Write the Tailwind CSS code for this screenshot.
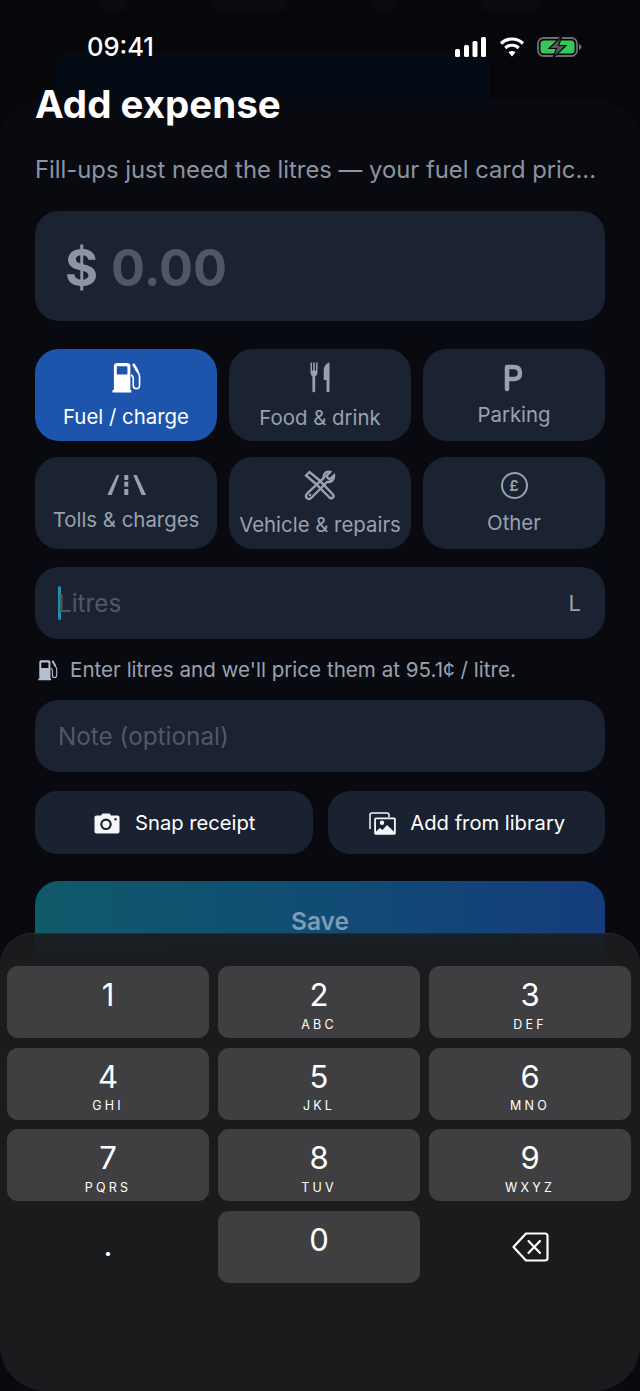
<!DOCTYPE html>
<html lang="en">
<head>
    <meta charset="UTF-8">
    <meta name="viewport" content="width=device-width, initial-scale=1.0">
    <title>Add expense</title>
    <script src="https://cdn.jsdelivr.net/npm/@tailwindcss/browser@4"></script>
</head>
<body class="bg-[#05070b] font-['Inter',sans-serif]">
    <div class="relative w-[640px] h-[1391px] overflow-hidden bg-[#05070b]">
        <!-- Dimmed page behind the sheet -->
        <div class="absolute top-0 left-0 right-0 h-[14px] flex justify-between px-[100px] blur-[3px]">
            <span class="w-[26px] h-[10px] bg-white/[0.03]"></span>
            <span class="w-[74px] h-[10px] bg-white/[0.03]"></span>
            <span class="w-[24px] h-[10px] bg-white/[0.03]"></span>
            <span class="w-[58px] h-[10px] bg-white/[0.03]"></span>
        </div>
        <div class="absolute left-[55px] top-[53px] w-[435px] h-[59px] bg-[#050b14] rounded-lg"></div>
        <div class="absolute left-0 right-0 top-[100px] bottom-0 rounded-t-[40px] bg-[#080a0f]"></div>

        <!-- Status bar -->
        <div class="relative h-[88px] flex items-start justify-between pl-[87px] pr-[58px] pt-[33px]">
            <span class="text-white text-[25.500px] leading-[28px] font-medium">09:41</span>
            <div class="flex items-center gap-[11px] pt-[3px]">
                <svg width="33" height="22" viewBox="0 0 33 22" fill="#fff">
                    <rect x="1" y="13" width="5" height="8" rx="1.5"/>
                    <rect x="10" y="9" width="5" height="12" rx="1.5"/>
                    <rect x="18.500" y="5" width="5" height="16" rx="1.500"/>
                    <rect x="27" y="1" width="5" height="20" rx="1.500"/>
                </svg>
                <svg width="28" height="22" viewBox="0 0 25 22" fill="none" stroke="#fff" stroke-width="3.200">
                    <path d="M1.500 7.500C7.500 1.500 17.500 1.500 23.500 7.500"/>
                    <path d="M5.800 12C9.500 8.300 15.500 8.300 19.200 12"/>
                    <path d="M12.500 20.500L9 16.300C11 14.500 14 14.500 16 16.300Z" fill="#fff" stroke="none"/>
                </svg>
                <svg width="45" height="22" viewBox="0 0 45 22" fill="none">
                    <rect x="1" y="2" width="39" height="18" rx="5.500" stroke="#6b6d70" stroke-width="1.800"/>
                    <rect x="3.500" y="4.500" width="34" height="13" rx="3.500" fill="#36c759"/>
                    <path d="M42 8v6c1.200-.4 2.500-1.600 2.500-3s-1.300-2.600-2.500-3z" fill="#6b6d70"/>
                    <path d="M25 0L12 12.500H19.500L16 22L29 9.500H21.500Z" fill="#55575a" stroke="#05070b" stroke-width="1.200"/>
                </svg>
            </div>
        </div>

        <!-- Sheet content -->
        <div class="relative px-[35px]">
            <h1 class="text-white text-[38.500px] leading-[32px] font-bold">Add expense</h1>
            <p class="mt-[35px] text-[#8b94a3] text-[23.800px] leading-[30px] whitespace-nowrap">Fill-ups just need the litres — your fuel card pric...</p>

            <div class="mt-[26px] h-[110px] rounded-[24px] bg-[#1b2231] flex items-center pl-[30px] pt-[3px] text-[50.500px] font-bold">
                <span class="text-[#8c95a4]">$</span><span class="ml-[13px] text-[#4f5665]">0.00</span>
            </div>

            <!-- Categories -->
            <div class="mt-[28px] grid grid-cols-3 gap-x-[12px] gap-y-[16px]">
                <div class="h-[92px] rounded-[24px] bg-[#1c55ab] flex flex-col items-center text-white pt-[13px]">
                    <svg class="h-[31px]" width="32" height="31" viewBox="0 0 32 32">
                        <path fill-rule="evenodd" fill="#fff" d="M3.500 29V4C3.500 2 5 1 7 1H17C19 1 20.500 2 20.500 4V29H21.500V31.500H2V29ZM7.500 4.500C7 4.500 6.500 5 6.500 5.500V12C6.500 12.500 7 13 7.500 13H16.500C17 13 17.500 12.500 17.500 12V5.500C17.500 5 17 4.500 16.500 4.500Z"/>
                        <path fill="none" stroke="#fff" stroke-width="1.700" d="M21 13.500C23 14 23.500 15 23.500 17V24C23.500 26.500 25 27.500 26.500 27.500C28.500 27.500 30 26 30 24V15C30 13 29 11.500 27.500 9"/>
                        <path fill="none" stroke="#fff" stroke-width="2.800" d="M23.500 2L28 10"/>
                    </svg>
                    <span class="mt-[9px] text-[20.400px] leading-[30px]">Fuel / charge</span>
                </div>
                <div class="h-[92px] rounded-[24px] bg-[#1b2231] flex flex-col items-center text-[#99a1af] pt-[13px]">
                    <svg class="h-[31px]" width="22" height="31" viewBox="0 0 22 31" fill="#99a1af">
                        <path d="M1.500 .5h1.500v8h1.200v-8h1.600v8H7v-8h1.500v10c0 2-1.100 3.200-2.300 3.800V29c0 1.700-2.800 1.700-2.800 0V14.300C2.600 13.700 1.500 12.500 1.500 10.500Z"/>
                        <path d="M20.500 .5V29c0 1.700-3 1.700-3 0V18h-2.800V9c0-4.500 2.500-8 5.800-8.500Z"/>
                    </svg>
                    <span class="mt-[10px] text-[20.400px] leading-[30px]">Food &amp; drink</span>
                </div>
                <div class="h-[92px] rounded-[24px] bg-[#1b2231] flex flex-col items-center text-[#99a1af] pt-[13px]">
                    <svg class="h-[31px]" width="22" height="31" viewBox="0 0 22 31" fill="none" stroke="#99a1af" stroke-width="4.500" stroke-linecap="round" stroke-linejoin="round">
                        <path d="M4 27V5h6.500c4.200 0 6.500 2.200 6.500 6s-2.300 6-6.500 6H4"/>
                    </svg>
                    <span class="mt-[7px] text-[20.400px] leading-[30px]">Parking</span>
                </div>
                <div class="h-[92px] rounded-[24px] bg-[#1b2231] flex flex-col items-center text-[#99a1af] pt-[13px]">
                    <svg class="h-[31px]" width="40" height="31" viewBox="0 0 40 31" fill="#99a1af">
                        <path d="M10.700 5h2.600L5.700 25H1.300Z"/>
                        <path d="M27.300 5h3.400L40 25h-4.300Z"/>
                        <rect x="18.300" y="5" width="4" height="5"/>
                        <rect x="18.300" y="11.700" width="4" height="5"/>
                        <rect x="18.300" y="19" width="4" height="6"/>
                    </svg>
                    <span class="mt-[4px] text-[20.400px] leading-[30px]">Tolls &amp; charges</span>
                </div>
                <div class="h-[92px] rounded-[24px] bg-[#1b2231] flex flex-col items-center text-[#99a1af] pt-[13px]">
                    <svg class="h-[31px]" width="32" height="31" viewBox="0 0 32 31" fill="none" stroke="#99a1af">
                        <path stroke-width="2.400" d="M2 5.500L5.500 2l9 7.500 14 14.500c1.500 1.500 1.500 2.500.5 3.500s-2.200 1.200-3.500 0L12 14Z"/>
                        <path stroke-width="2.400" d="M30 5.500l-4.500 4-3.300-3 4-4.500c-3.500-1-7 1.500-6.500 6L3.500 23c-2 2-2 3.500-.8 5 1.300 1.300 3.200 1.200 5 -.5L23 12c3.800.8 7.500-2 7-6.500Z"/>
                        <circle cx="6" cy="25" r="1.300" fill="#99a1af" stroke="none"/>
                    </svg>
                    <span class="mt-[9px] text-[20.400px] leading-[30px] whitespace-nowrap">Vehicle &amp; repairs</span>
                </div>
                <div class="h-[92px] rounded-[24px] bg-[#1b2231] flex flex-col items-center text-[#99a1af] pt-[13px]">
                    <div class="w-[27px] h-[27px] mt-[2px] mb-[2px] rounded-full border-[2.500px] border-[#99a1af] flex items-center justify-center text-[15px] leading-none font-semibold">£</div>
                    <span class="mt-[7px] text-[20.400px] leading-[30px]">Other</span>
                </div>
            </div>

            <!-- Litres -->
            <div class="mt-[18px] h-[72px] rounded-[24px] bg-[#1b2231] flex items-center justify-between pl-[23px] pr-[24px]">
                <div class="flex items-center">
                    <span class="w-[3px] h-[34px] rounded-full bg-[#1c93ad]"></span>
                    <span class="-ml-[3px] text-[#505868] text-[24.300px] leading-[30px]">Litres</span>
                </div>
                <span class="text-[#99a1af] text-[22px]">L</span>
            </div>

            <div class="mt-[19px] h-[24px] flex items-center gap-[12px] pl-[2px] text-[#99a1af] text-[20.600px] whitespace-nowrap">
                <svg width="21" height="22" viewBox="0 0 32 32">
                    <path fill-rule="evenodd" fill="#b4bfcf" d="M3.500 29V4C3.500 2 5 1 7 1H17C19 1 20.500 2 20.500 4V29H21.500V31.500H2V29ZM7.500 4.500C7 4.500 6.500 5 6.500 5.500V12C6.500 12.500 7 13 7.500 13H16.500C17 13 17.500 12.500 17.500 12V5.500C17.500 5 17 4.500 16.500 4.500Z"/>
                    <path fill="none" stroke="#b4bfcf" stroke-width="1.700" d="M21 13.500C23 14 23.500 15 23.500 17V24C23.500 26.500 25 27.500 26.500 27.500C28.500 27.500 30 26 30 24V15C30 13 29 11.500 27.500 9"/>
                    <path fill="none" stroke="#b4bfcf" stroke-width="2.800" d="M23.500 2L28 10"/>
                </svg>
                <span>Enter litres and we'll price them at 95.1¢ / litre.</span>
            </div>

            <!-- Note -->
            <div class="mt-[18px] h-[72px] rounded-[24px] bg-[#1b2231] flex items-center pl-[23px] pt-[1px] text-[#505868] text-[24.300px]">Note (optional)</div>

            <!-- Receipt buttons -->
            <div class="mt-[19px] grid grid-cols-2 gap-[15px]">
                <div class="h-[63px] rounded-[22px] bg-[#1a2130] flex items-center justify-center gap-[15px] pl-[2px] pt-[1px] text-white text-[20.200px]">
                    <svg width="26" height="21" viewBox="0 0 26 21" fill="#f5f6f8">
                        <path fill-rule="evenodd" d="M2.500 2.500H7L8.500.5h7l1.500 2h6.500c1.200 0 2 .8 2 2v14c0 1.200-.8 2-2 2h-21c-1.200 0-2-.8-2-2v-14c0-1.200.8-2 2-2ZM12 5.500a5.800 5.800 0 1 0 0 11.600a5.800 5.800 0 0 0 0-11.600ZM12 7.700a3.600 3.600 0 1 1 0 7.200a3.600 3.600 0 0 1 0-7.200ZM21.500 5a1.300 1.300 0 1 0 0 2.600a1.300 1.300 0 0 0 0-2.600Z"/>
                    </svg>
                    <span>Snap receipt</span>
                </div>
                <div class="h-[63px] rounded-[22px] bg-[#1a2130] flex items-center justify-center gap-[14px] pl-[2px] pt-[1px] text-white text-[20.200px]">
                    <svg width="27" height="23" viewBox="0 0 27 23" fill="none">
                        <path stroke="#f5f6f8" stroke-width="1.500" d="M1 17V3c0-1.200.8-2 2-2h15c1.200 0 2 .8 2 2v2"/>
                        <path fill-rule="evenodd" fill="#f5f6f8" d="M7 5.500h18c1 0 1.800.8 1.800 1.800V21c0 1-.8 1.800-1.800 1.800H7c-1 0-1.800-.8-1.800-1.800V7.300C5.200 6.300 6 5.500 7 5.500ZM13 8.500a2.200 2.200 0 1 0 0 4.400a2.200 2.200 0 0 0 0-4.400ZM7 19.500L11 16l2.500 2 4.500-5 7 6.800V7.300H7Z"/>
                    </svg>
                    <span>Add from library</span>
                </div>
            </div>

            <!-- Save -->
            <div class="mt-[27px] h-[96px] rounded-[24px] bg-gradient-to-r from-[#0f5a6a] to-[#153c7c] flex justify-center pt-[24px] text-[#7c9db4] text-[24.500px] leading-[32px] font-semibold">Save</div>
        </div>

        <!-- Number pad -->
        <div class="absolute left-0 right-0 top-[933px] bottom-0 rounded-t-[32px] rounded-b-[46px] border-t border-[#2a2b2d] bg-gradient-to-b from-[#1a1b1d]/90 to-[#1a1b1d] to-[32px] pl-[7px] pt-[32px]">
            <div class="grid grid-cols-[202px_202px_202px] gap-x-[9px] gap-y-[9.500px] text-white">
                <div class="h-[72px] rounded-[11px] bg-[#3f3f41] flex flex-col items-center pt-[11px]"><span class="text-[31px] leading-[36px]">1</span></div>
                <div class="h-[72px] rounded-[11px] bg-[#3f3f41] flex flex-col items-center pt-[11px]"><span class="text-[31px] leading-[36px]">2</span><span class="mt-[3.500px] text-[12.500px] leading-[15px] tracking-[3.200px]">ABC</span></div>
                <div class="h-[72px] rounded-[11px] bg-[#3f3f41] flex flex-col items-center pt-[11px]"><span class="text-[31px] leading-[36px]">3</span><span class="mt-[3.500px] text-[12.500px] leading-[15px] tracking-[3.200px]">DEF</span></div>
                <div class="h-[72px] rounded-[11px] bg-[#3f3f41] flex flex-col items-center pt-[11px]"><span class="text-[31px] leading-[36px]">4</span><span class="mt-[3.500px] text-[12.500px] leading-[15px] tracking-[3.200px]">GHI</span></div>
                <div class="h-[72px] rounded-[11px] bg-[#3f3f41] flex flex-col items-center pt-[11px]"><span class="text-[31px] leading-[36px]">5</span><span class="mt-[3.500px] text-[12.500px] leading-[15px] tracking-[3.200px]">JKL</span></div>
                <div class="h-[72px] rounded-[11px] bg-[#3f3f41] flex flex-col items-center pt-[11px]"><span class="text-[31px] leading-[36px]">6</span><span class="mt-[3.500px] text-[12.500px] leading-[15px] tracking-[3.200px]">MNO</span></div>
                <div class="h-[72px] rounded-[11px] bg-[#3f3f41] flex flex-col items-center pt-[11px]"><span class="text-[31px] leading-[36px]">7</span><span class="mt-[3.500px] text-[12.500px] leading-[15px] tracking-[3.200px]">PQRS</span></div>
                <div class="h-[72px] rounded-[11px] bg-[#3f3f41] flex flex-col items-center pt-[11px]"><span class="text-[31px] leading-[36px]">8</span><span class="mt-[3.500px] text-[12.500px] leading-[15px] tracking-[3.200px]">TUV</span></div>
                <div class="h-[72px] rounded-[11px] bg-[#3f3f41] flex flex-col items-center pt-[11px]"><span class="text-[31px] leading-[36px]">9</span><span class="mt-[3.500px] text-[12.500px] leading-[15px] tracking-[3.200px]">WXYZ</span></div>
                <div class="h-[72px] flex flex-col items-center pt-[16px]"><span class="text-[31px] leading-[36px]">.</span></div>
                <div class="h-[72px] rounded-[11px] bg-[#3f3f41] flex flex-col items-center pt-[11px]"><span class="text-[31px] leading-[36px]">0</span></div>
                <div class="h-[72px] flex items-center justify-center">
                    <svg width="37" height="30" viewBox="0 0 37 30" fill="none" stroke="#fff" stroke-width="2.200" stroke-linejoin="round">
                        <path d="M14 1.500H33c1.700 0 2.500.8 2.500 2.500V26c0 1.700-.8 2.500-2.500 2.500H14L1.500 15Z"/>
                        <path stroke-linecap="round" d="M16.500 9L28 21M28 9L16.500 21"/>
                    </svg>
                </div>
            </div>
        </div>
    </div>
</body>
</html>
